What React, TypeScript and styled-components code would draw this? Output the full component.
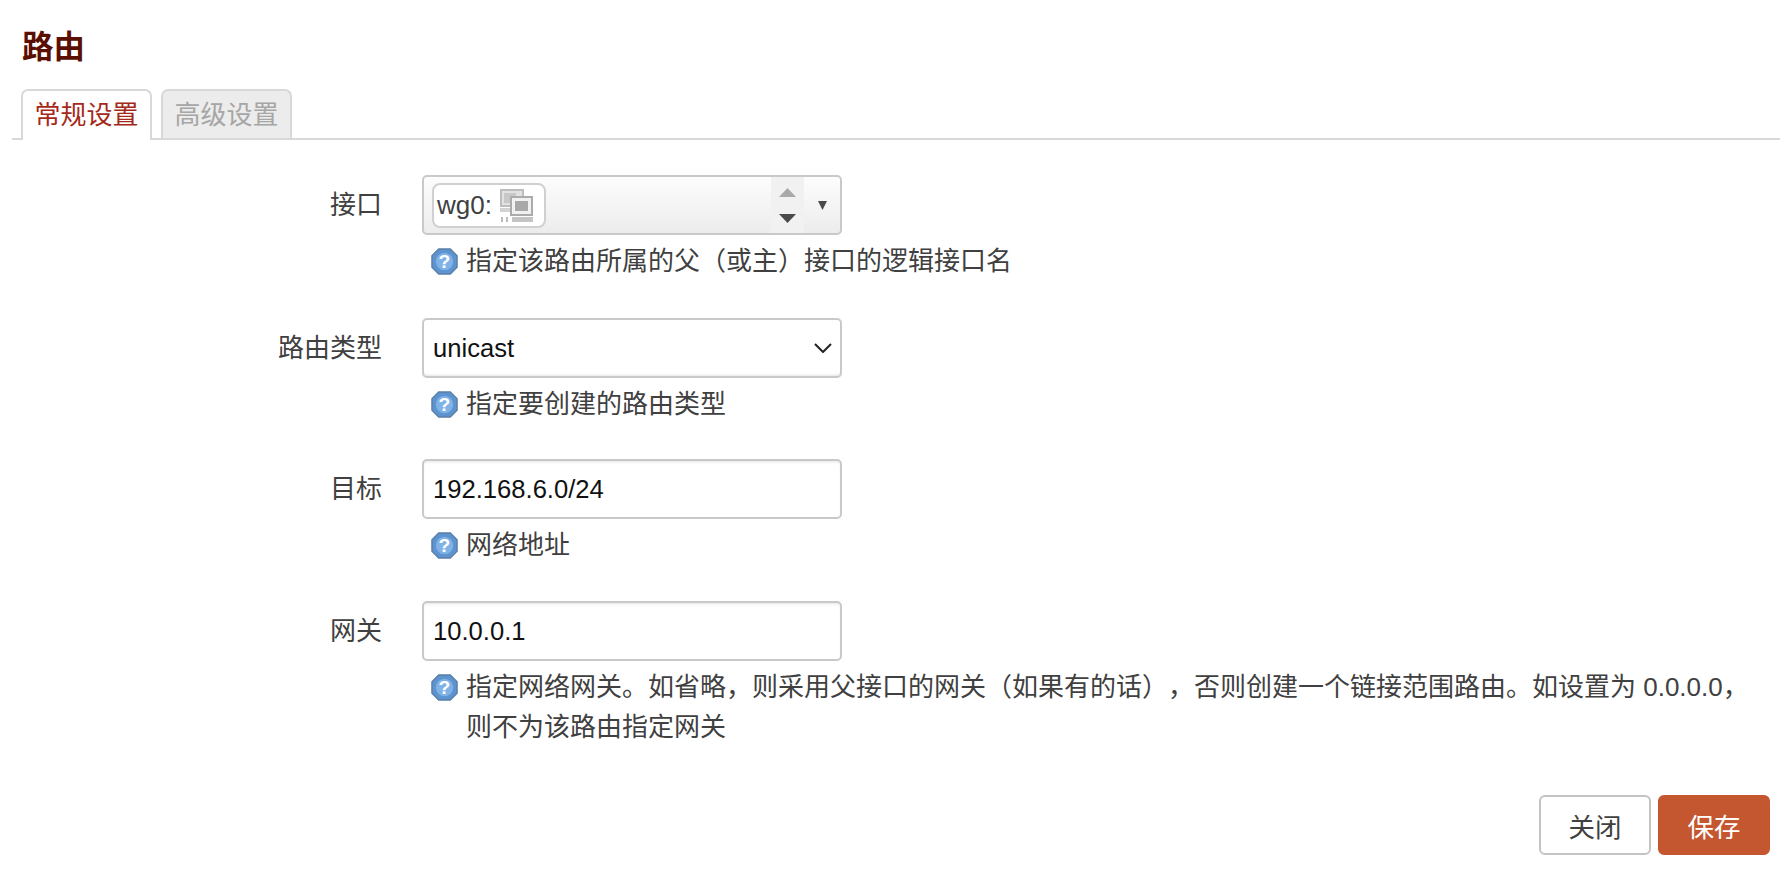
import React from "react";
import styled, { createGlobalStyle } from "styled-components";

const GlobalStyle = createGlobalStyle`
  html, body {
    margin: 0;
    padding: 0;
    background: #fff;
    overflow: hidden;
  }
  body {
    font-family: "Liberation Sans", "Noto Sans CJK SC", sans-serif;
    color: #404040;
    text-spacing-trim: space-all;
  }
`;

const Page = styled.div`
  width: 1792px;
  height: 876px;
  box-sizing: border-box;
  padding: 26px 12px 0;
`;

const Title = styled.h2`
  margin: 0 0 0 10px;
  height: 63px;
  font-size: 31.5px;
  line-height: 42px;
  font-weight: 700;
  color: #5a0f00;
`;

const Tabs = styled.ul`
  list-style: none;
  margin: 0;
  padding: 0 0 0 9px;
  height: 49px;
  display: flex;
  gap: 9px;
  border-bottom: 2px solid #d8d8d8;
`;

const Tab = styled.li<{ $active?: boolean }>`
  box-sizing: border-box;
  width: 131px;
  height: ${(p) => (p.$active ? "51px" : "49px")};
  border: 2px solid #d8d8d8;
  border-bottom: none;
  border-radius: 7px 7px 0 0;
  background: ${(p) => (p.$active ? "#fff" : "#ececec")};
  color: ${(p) => (p.$active ? "#a5291a" : "#a6a6a6")};
  font-size: 26px;
  line-height: 48px;
  text-align: center;
`;

const Form = styled.div`
  padding-top: 35px;
`;

const Row = styled.div<{ $height: number }>`
  display: grid;
  grid-template-columns: 370px 1fr;
  column-gap: 40px;
  height: ${(p) => p.$height}px;
`;

const Label = styled.label`
  height: 60px;
  text-align: right;
  font-size: 26px;
  line-height: 60px;
  color: #404040;
`;

const Field = styled.div`
  min-width: 0;
`;

const fieldBox = `
  box-sizing: border-box;
  width: 420px;
  height: 60px;
  border: 2px solid #c9c9c9;
  border-radius: 5px;
`;

const MultiSelect = styled.div`
  ${fieldBox}
  display: flex;
  align-items: center;
  padding-left: 8px;
  background: linear-gradient(#fdfdfd, #ececec);
`;

const Chip = styled.div`
  box-sizing: border-box;
  width: 114px;
  height: 45px;
  display: flex;
  align-items: center;
  gap: 8px;
  padding-left: 3px;
  border: 2px solid #d0d0d0;
  border-radius: 8px;
  background: #fff;
  font-size: 26px;
  color: #404040;
`;

const Spinner = styled.div`
  margin-left: auto;
  width: 33px;
  height: 56px;
  background: #f1f1f1;
  display: flex;
  flex-direction: column;
  align-items: center;
  justify-content: center;
  gap: 17px;
`;

const ArrowBox = styled.div`
  width: 36px;
  height: 56px;
  display: flex;
  align-items: center;
  justify-content: center;
`;

const Select = styled.div`
  ${fieldBox}
  display: flex;
  align-items: center;
  justify-content: space-between;
  padding: 0 8px 0 9px;
  background: #fff;
  box-shadow: inset 0 -3px 3px -2px #e4e4e4;
  font-size: 25.6px;
  color: #111;
`;

const Input = styled.input`
  ${fieldBox}
  display: block;
  padding: 0 9px;
  background: #fff;
  box-shadow: inset 0 2px 3px -1px #e4e4e4;
  font-family: inherit;
  font-size: 25.6px;
  color: #111;
  outline: none;
`;

const Desc = styled.div`
  display: flex;
  align-items: flex-start;
  gap: 8px;
  margin: 6px 0 0 9px;
  font-size: 26px;
  line-height: 40px;
  color: #404040;
`;

const DescIcon = styled.svg`
  flex: none;
  margin-top: 7px;
`;

const Actions = styled.div`
  display: flex;
  justify-content: flex-end;
  gap: 7px;
  padding: 1px 10px 0 0;
`;

const Button = styled.button<{ $primary?: boolean }>`
  box-sizing: border-box;
  width: 112px;
  height: 60px;
  padding: 0;
  border: 2px solid ${(p) => (p.$primary ? "#c45630" : "#c4c4c4")};
  border-radius: 6px;
  background: ${(p) => (p.$primary ? "#c45630" : "#fff")};
  color: ${(p) => (p.$primary ? "#fff" : "#404040")};
  font-family: inherit;
  font-size: 26.5px;
`;

function HelpIcon() {
  return (
    <DescIcon width="27" height="27" viewBox="0 0 28 28">
      <polygon
        points="8,1 20,1 27,8 27,20 20,27 8,27 1,20 1,8"
        fill="#5d93cf"
        stroke="#5a7fa8"
        strokeWidth="1.5"
      />
      <circle cx="14" cy="14" r="9" fill="#7fb2e6" />
      <text
        x="14"
        y="21"
        textAnchor="middle"
        fontSize="20"
        fontWeight="700"
        fontFamily="Liberation Sans, sans-serif"
        fill="#fff"
      >
        ?
      </text>
    </DescIcon>
  );
}

function NetworkIcon() {
  return (
    <svg width="33" height="33" viewBox="0 0 33 33">
      <rect x="1" y="1" width="22" height="16" fill="#e2e2e2" stroke="#bdbdbd" strokeWidth="2" />
      <rect x="4" y="4" width="12" height="10" fill="#c8c8c8" />
      <rect x="0" y="19" width="10" height="4" fill="#d2d2d2" />
      <rect x="11" y="8" width="21" height="18" fill="#f1f1f1" stroke="#ababab" strokeWidth="2" />
      <rect x="15" y="12" width="13" height="10" fill="#a8a8a8" />
      <rect x="12" y="28" width="21" height="5" fill="#c4c4c4" />
      <rect x="1" y="28" width="2" height="5" fill="#bdbdbd" />
      <rect x="6" y="28" width="2" height="5" fill="#bdbdbd" />
    </svg>
  );
}

function Triangle({ up, color, w, h }: { up?: boolean; color: string; w: number; h: number }) {
  return (
    <svg width={w} height={h} viewBox="0 0 16 8" preserveAspectRatio="none">
      <polygon points={up ? "8,0 16,8 0,8" : "0,0 16,0 8,8"} fill={color} />
    </svg>
  );
}

function Chevron() {
  return (
    <svg width="18" height="10" viewBox="0 0 18 10">
      <path d="M1 1l8 8 8-8" fill="none" stroke="#222" strokeWidth="2" />
    </svg>
  );
}

export default function App() {
  return (
    <Page>
      <GlobalStyle />
      <Title>路由</Title>
      <Tabs>
        <Tab $active>常规设置</Tab>
        <Tab>高级设置</Tab>
      </Tabs>
      <Form>
        <Row $height={143}>
          <Label>接口</Label>
          <Field>
            <MultiSelect>
              <Chip>
                wg0:
                <NetworkIcon />
              </Chip>
              <Spinner>
                <Triangle up color="#a9a9a9" w={17} h={9} />
                <Triangle color="#4a4a4a" w={17} h={9} />
              </Spinner>
              <ArrowBox>
                <Triangle color="#4a4a4a" w={9} h={9} />
              </ArrowBox>
            </MultiSelect>
            <Desc>
              <HelpIcon />
              指定该路由所属的父（或主）接口的逻辑接口名
            </Desc>
          </Field>
        </Row>
        <Row $height={141}>
          <Label>路由类型</Label>
          <Field>
            <Select>
              unicast
              <Chevron />
            </Select>
            <Desc>
              <HelpIcon />
              指定要创建的路由类型
            </Desc>
          </Field>
        </Row>
        <Row $height={142}>
          <Label>目标</Label>
          <Field>
            <Input defaultValue="192.168.6.0/24" />
            <Desc>
              <HelpIcon />
              网络地址
            </Desc>
          </Field>
        </Row>
        <Row $height={193}>
          <Label>网关</Label>
          <Field>
            <Input defaultValue="10.0.0.1" />
            <Desc>
              <HelpIcon />
              <span>
                指定网络网关。如省略，则采用父接口的网关（如果有的话），否则创建一个链接范围路由。如设置为 0.0.0.0，
                <br />
                则不为该路由指定网关
              </span>
            </Desc>
          </Field>
        </Row>
      </Form>
      <Actions>
        <Button>关闭</Button>
        <Button $primary>保存</Button>
      </Actions>
    </Page>
  );
}
